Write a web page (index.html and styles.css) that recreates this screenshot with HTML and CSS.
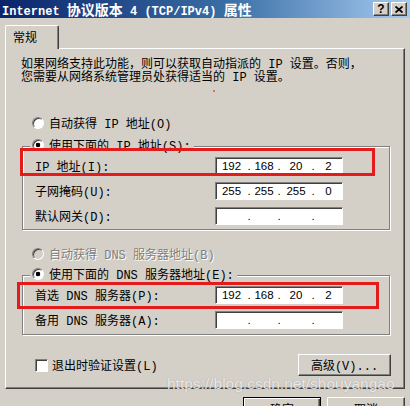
FILE: index.html
```html
<!DOCTYPE html>
<html lang="zh-CN">
<head>
  <meta charset="UTF-8">
  <title>Internet 协议版本 4 (TCP/IPv4) 属性</title>
  <link rel="stylesheet" href="styles.css">
</head>
<body>
  <div class="titlebar">
    <span class="title">Internet <span class="cjk">协议版本</span> 4 (TCP/IPv4) <span class="cjk">属性</span></span>
    <div class="title-btns">
      <span class="tbtn">?</span>
      <span class="tbtn">
        <svg width="8" height="7" viewBox="0 0 8 7"><path d="M0.5 0.5 L7.5 6.5 M7.5 0.5 L0.5 6.5" stroke="#000" stroke-width="1.8"/></svg>
      </span>
    </div>
  </div>

  <div class="dialog">
    <div class="tabs">
      <div class="tab">常规</div>
    </div>

    <div class="panel">
      <span class="speck"></span>
      <p class="desc">如果网络支持此功能，则可以获取自动指派的 IP 设置。否则，<br>您需要从网络系统管理员处获得适当的 IP 设置。</p>

      <div class="radio top"><span class="rb"></span>自动获得 IP 地址(O)</div>

      <!-- IP 地址 -->
      <div class="group">
        <div class="radio legend"><span class="rb on"></span>使用下面的 IP 地址(S):</div>
        <div class="row">
          <span class="lbl">IP 地址(I):</span>
          <div class="ip">
            <span class="f1">192</span><span class="sep">.</span><span class="f2">168</span><span class="sep">.</span><span class="f3">20</span><span class="sep">.</span><span class="f4">2</span>
          </div>
          <span class="mark"></span>
        </div>
        <div class="row">
          <span class="lbl">子网掩码(U):</span>
          <div class="ip">
            <span class="f1">255</span><span class="sep">.</span><span class="f2">255</span><span class="sep">.</span><span class="f3">255</span><span class="sep">.</span><span class="f4">0</span>
          </div>
        </div>
        <div class="row">
          <span class="lbl">默认网关(D):</span>
          <div class="ip">
            <span class="f1"></span><span class="sep">.</span><span class="f2"></span><span class="sep">.</span><span class="f3"></span><span class="sep">.</span><span class="f4"></span>
          </div>
        </div>
      </div>

      <div class="radio mid disabled"><span class="rb"></span>自动获得 DNS 服务器地址(B)</div>

      <!-- DNS -->
      <div class="group dns-group">
        <div class="radio legend"><span class="rb on"></span>使用下面的 DNS 服务器地址(E):</div>
        <div class="row">
          <span class="lbl">首选 DNS 服务器(P):</span>
          <div class="ip">
            <span class="f1">192</span><span class="sep">.</span><span class="f2">168</span><span class="sep">.</span><span class="f3">20</span><span class="sep">.</span><span class="f4">2</span>
          </div>
          <span class="mark dns"></span>
        </div>
        <div class="row">
          <span class="lbl">备用 DNS 服务器(A):</span>
          <div class="ip">
            <span class="f1"></span><span class="sep">.</span><span class="f2"></span><span class="sep">.</span><span class="f3"></span><span class="sep">.</span><span class="f4"></span>
          </div>
        </div>
      </div>

      <div class="check-row">
        <div class="check"><span class="cb"></span>退出时验证设置(L)</div>
        <div class="btn">高级(V)...</div>
      </div>
    </div>

    <div class="footer">
      <div class="btn big default">确定</div>
      <div class="btn big">取消</div>
    </div>
  </div>

  <div class="watermark">https://blog.csdn.net/shouyangao</div>
</body>
</html>
```

FILE: styles.css
```css
* {
  margin: 0;
  padding: 0;
  box-sizing: border-box;
}
body {
  width: 410px;
  height: 406px;
  overflow: hidden;
  background: #d4d0c8;
  color: #000;
  font-family: "Liberation Mono", "Noto Sans CJK SC", monospace;
  font-size: 12px;
}

/* 标题栏 */
.titlebar {
  height: 18px;
  display: flex;
  align-items: center;
  justify-content: space-between;
  padding: 0 3px 0 2px;
  background: linear-gradient(90deg, #0a246a 0%, #3a6ea5 55%, #a6caf0 100%);
}
.title {
  color: #fff;
  font-weight: bold;
  font-size: 12px;
  white-space: nowrap;
}
.title .cjk {
  font-family: "Noto Sans CJK SC", sans-serif;
  font-size: 14px;
}
.title-btns {
  display: flex;
  gap: 2px;
}
.tbtn {
  width: 16px;
  height: 14px;
  display: flex;
  align-items: center;
  justify-content: center;
  background: #d4d0c8;
  border: 1px solid;
  border-color: #fff #404040 #404040 #fff;
  box-shadow: inset -1px -1px 0 #808080;
  font-family: "Liberation Sans", sans-serif;
  font-weight: bold;
  font-size: 12px;
  line-height: 1;
}

/* 对话框 */
.dialog {
  padding: 0 5px;
}
.tabs {
  display: flex;
  margin-top: 7px;
  margin-bottom: -1px;
  position: relative;
  z-index: 1;
}
.tab {
  width: 54px;
  height: 24px;
  padding: 3px 0 0 7px;
  line-height: 16px;
  background: #d4d0c8;
  border: 1px solid;
  border-color: #fff #404040 transparent #fff;
  border-bottom: none;
  border-radius: 2px 2px 0 0;
  box-shadow: inset -1px 0 0 #808080;
  font-family: "Noto Sans CJK SC", sans-serif;
  font-size: 12px;
}
.panel {
  position: relative;
  width: 400px;
  height: 341px;
  padding-top: 10px;
  border: 1px solid;
  border-color: #fff #404040 #404040 #fff;
  box-shadow: inset -1px -1px 0 #808080;
}
.speck {
  position: absolute;
  left: 207px;
  top: 41px;
  width: 2px;
  height: 2px;
  background: #e07070;
}
.desc {
  margin: 0 15px;
  line-height: 13px;
  white-space: nowrap;
}

/* 单选按钮 */
.radio {
  display: flex;
  align-items: center;
  height: 16px;
  white-space: nowrap;
}
.radio.top {
  margin: 30px 0 0 26px;
}
.radio.mid {
  margin: 16px 0 0 26px;
}
.radio.disabled {
  color: #808080;
  text-shadow: 1px 1px 0 #fff;
}
.rb {
  width: 12px;
  height: 12px;
  margin-right: 5px;
  border-radius: 50%;
  background: #fff;
  border: 1px solid;
  border-color: #808080 #fff #fff #808080;
  box-shadow: inset 1px 1px 0 #404040;
}
.rb.on {
  background: radial-gradient(circle, #000 0, #000 2px, #fff 2.6px);
}
.disabled .rb {
  background: #d4d0c8;
}

/* 分组框 */
.group {
  margin: 15px 14px 0 16px;
  padding-bottom: 1px;
  border: 1px solid #808080;
  box-shadow: inset 1px 1px 0 #fff, 1px 1px 0 #fff;
}
.dns-group {
  margin-top: 13px;
  padding-bottom: 2px;
}
.radio.legend {
  width: fit-content;
  margin: -10px 0 0 7px;
  padding: 0 3px 0 2px;
  background: #d4d0c8;
}
.row {
  position: relative;
  display: flex;
  align-items: center;
  height: 25px;
  padding-left: 12px;
}
.lbl {
  width: 180px;
  white-space: nowrap;
}
.ip {
  width: 128px;
  height: 18px;
  display: flex;
  align-items: center;
  padding-left: 1px;
  background: #fff;
  border: 1px solid;
  border-color: #808080 #fff #fff #808080;
  box-shadow: inset 1px 1px 0 #404040;
  font-family: "Liberation Sans", sans-serif;
  font-size: 11.5px;
}
.ip span {
  text-align: center;
}
.f1 { width: 29px; }
.f2 { width: 24px; }
.f3 { width: 28px; }
.f4 { width: 25px; }
.sep { width: 6px; }

/* 红色标注框 */
.mark {
  position: absolute;
  left: -3px;
  top: -5px;
  width: 355px;
  height: 28px;
  border: 3px solid #e31b1b;
}
.mark.dns {
  left: -6px;
  top: 0;
  width: 362px;
  height: 27px;
}

/* 底部 */
.check-row {
  display: flex;
  align-items: center;
  justify-content: space-between;
  height: 22px;
  margin: 19px 13px 0 29px;
}
.check {
  display: flex;
  align-items: center;
  white-space: nowrap;
}
.cb {
  width: 13px;
  height: 13px;
  margin-right: 4px;
  background: #fff;
  border: 1px solid;
  border-color: #808080 #fff #fff #808080;
  box-shadow: inset 1px 1px 0 #404040;
}
.btn {
  width: 93px;
  height: 22px;
  display: flex;
  align-items: center;
  justify-content: center;
  background: #d4d0c8;
  border: 1px solid;
  border-color: #fff #404040 #404040 #fff;
  box-shadow: inset -1px -1px 0 #808080;
  white-space: nowrap;
}
.footer {
  display: flex;
  justify-content: flex-end;
  gap: 6px;
  margin-top: 8px;
}
.btn.big {
  width: 78px;
  height: 23px;
}
.btn.default {
  border-color: #000;
  box-shadow: inset 1px 1px 0 #fff, inset -1px -1px 0 #404040, inset -2px -2px 0 #808080;
}
.watermark {
  position: absolute;
  left: 167px;
  top: 375px;
  line-height: 18px;
  font-family: "Liberation Sans", sans-serif;
  font-size: 15.5px;
  color: rgba(255, 255, 255, 0.8);
  text-shadow: 0 0 1px rgba(80, 80, 80, 0.5);
  white-space: nowrap;
}
```
